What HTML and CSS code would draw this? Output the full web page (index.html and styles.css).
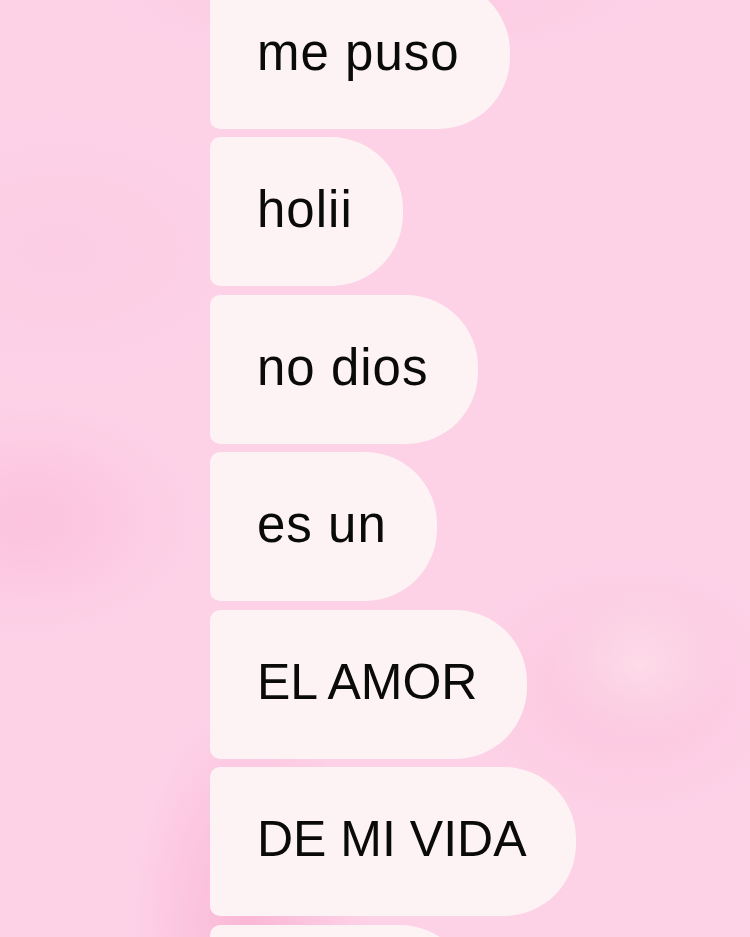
FILE: index.html
```html
<!DOCTYPE html>
<html lang="es">
<head>
<meta charset="utf-8">
<title>Mensajes</title>
<link rel="stylesheet" href="styles.css">
</head>
<body>
<main class="chat">
  <div class="bubble bubble-lower">me puso</div>
  <div class="bubble bubble-lower">holii</div>
  <div class="bubble bubble-lower">no dios</div>
  <div class="bubble bubble-lower">es un</div>
  <div class="bubble bubble-upper">EL AMOR</div>
  <div class="bubble bubble-upper">DE MI VIDA</div>
  <div class="bubble bubble-cut"></div>
</main>
</body>
</html>
```

FILE: styles.css
```css
html, body {
  margin: 0;
  padding: 0;
  height: 100%;
  overflow: hidden;
}

body {
  background-color: #fdd2e7;
  background-image:
    radial-gradient(ellipse 90px 80px at 640px 665px, rgba(253, 222, 234, 0.85), rgba(253, 222, 234, 0) 100%),
    radial-gradient(ellipse 170px 130px at 630px 690px, rgba(250, 188, 215, 0.6), rgba(250, 188, 215, 0) 100%),
    radial-gradient(ellipse 170px 120px at 30px 520px, rgba(250, 182, 213, 0.55), rgba(250, 182, 213, 0) 100%),
    radial-gradient(ellipse 120px 220px at 250px 920px, rgba(250, 178, 211, 0.85), rgba(250, 178, 211, 0) 100%),
    radial-gradient(ellipse 220px 140px at 60px 250px, rgba(250, 198, 223, 0.4), rgba(250, 198, 223, 0) 100%),
    radial-gradient(ellipse 280px 60px at 380px 0px, rgba(250, 192, 219, 0.45), rgba(250, 192, 219, 0) 100%);
  font-family: "Liberation Sans", Arial, Helvetica, sans-serif;
}

.chat {
  display: flex;
  flex-direction: column;
  align-items: flex-start;
  gap: 8.5px;
  padding-left: 210px;
  margin-top: -20.5px;
}

.bubble {
  box-sizing: border-box;
  height: 149px;
  line-height: 145px;
  padding: 0 50px 4px 47px;
  color: #0a0a0a;
  background: #fdf3f4;
  border-radius: 10px 72px 72px 10px;
  white-space: nowrap;
}

.bubble-lower {
  font-size: 51px;
  letter-spacing: 1px;
}

.bubble-upper {
  font-size: 50px;
}

.bubble-cut {
  width: 262px;
}
```
